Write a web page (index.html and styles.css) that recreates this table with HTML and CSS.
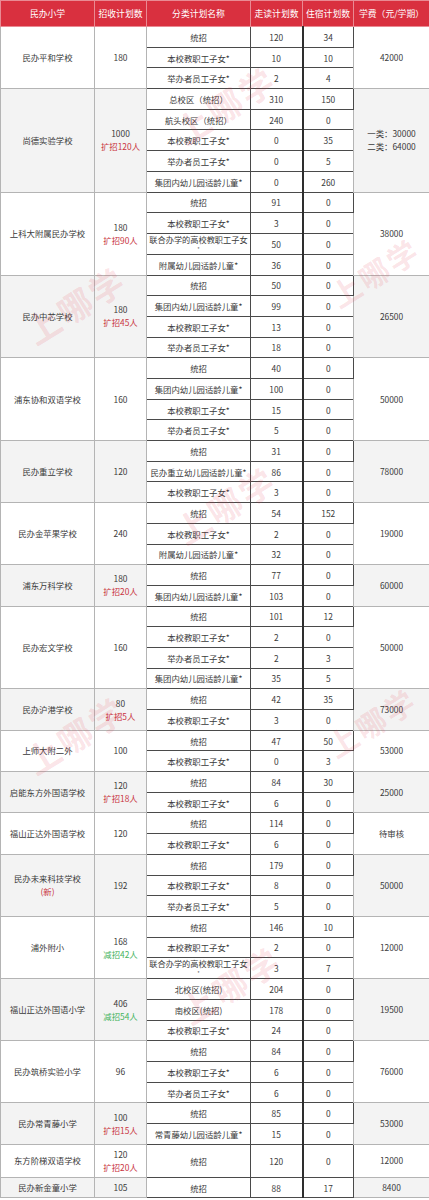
FILE: index.html
```html
<!DOCTYPE html>
<html lang="zh-CN">
<head>
<meta charset="utf-8">
<title>民办小学招生计划</title>
<link rel="stylesheet" href="styles.css">
</head>
<body>
<div class="sheet">
<table class="plan">
<colgroup>
<col class="w-school"><col class="w-plan"><col class="w-cat"><col class="w-day"><col class="w-board"><col class="w-fee">
</colgroup>
<thead>
<tr><th>民办小学</th><th>招收计划数</th><th>分类计划名称</th><th>走读计划数</th><th>住宿计划数</th><th>学费（元/学期）</th></tr>
</thead>
<tbody class="g">
<tr><td class="m" rowspan="3">民办平和学校</td><td class="m" rowspan="3">180</td><td class="s">统招</td><td class="s">120</td><td class="s b">34</td><td class="m f" rowspan="3">42000</td></tr>
<tr><td class="s">本校教职工子女*</td><td class="s">10</td><td class="s b">10</td></tr>
<tr><td class="s">举办者员工子女*</td><td class="s">2</td><td class="s b">4</td></tr>
</tbody>
<tbody class="g alt">
<tr><td class="m" rowspan="5">尚德实验学校</td><td class="m" rowspan="5">1000<br><span class="up">扩招120人</span></td><td class="s">总校区（统招）</td><td class="s">310</td><td class="s b">150</td><td class="m f" rowspan="5">一类：30000<br>二类：64000</td></tr>
<tr><td class="s">航头校区（统招）</td><td class="s">240</td><td class="s b">0</td></tr>
<tr><td class="s">本校教职工子女*</td><td class="s">0</td><td class="s b">35</td></tr>
<tr><td class="s">举办者员工子女*</td><td class="s">0</td><td class="s b">5</td></tr>
<tr><td class="s">集团内幼儿园适龄儿童*</td><td class="s">0</td><td class="s b">260</td></tr>
</tbody>
<tbody class="g">
<tr><td class="m" rowspan="4">上科大附属民办学校</td><td class="m" rowspan="4">180<br><span class="up">扩招90人</span></td><td class="s">统招</td><td class="s">91</td><td class="s b">0</td><td class="m f" rowspan="4">38000</td></tr>
<tr><td class="s">本校教职工子女*</td><td class="s">3</td><td class="s b">0</td></tr>
<tr><td class="s two"><span class="l1">联合办学的高校教职工子女</span><span class="l2">*</span></td><td class="s">50</td><td class="s b">0</td></tr>
<tr><td class="s">附属幼儿园适龄儿童*</td><td class="s">36</td><td class="s b">0</td></tr>
</tbody>
<tbody class="g alt">
<tr><td class="m" rowspan="4">民办中芯学校</td><td class="m" rowspan="4">180<br><span class="up">扩招45人</span></td><td class="s">统招</td><td class="s">50</td><td class="s b">0</td><td class="m f" rowspan="4">26500</td></tr>
<tr><td class="s">集团内幼儿园适龄儿童*</td><td class="s">99</td><td class="s b">0</td></tr>
<tr><td class="s">本校教职工子女*</td><td class="s">13</td><td class="s b">0</td></tr>
<tr><td class="s">举办者员工子女*</td><td class="s">18</td><td class="s b">0</td></tr>
</tbody>
<tbody class="g">
<tr><td class="m" rowspan="4">浦东协和双语学校</td><td class="m" rowspan="4">160</td><td class="s">统招</td><td class="s">40</td><td class="s b">0</td><td class="m f" rowspan="4">50000</td></tr>
<tr><td class="s">集团内幼儿园适龄儿童*</td><td class="s">100</td><td class="s b">0</td></tr>
<tr><td class="s">本校教职工子女*</td><td class="s">15</td><td class="s b">0</td></tr>
<tr><td class="s">举办者员工子女*</td><td class="s">5</td><td class="s b">0</td></tr>
</tbody>
<tbody class="g alt">
<tr><td class="m" rowspan="3">民办重立学校</td><td class="m" rowspan="3">120</td><td class="s">统招</td><td class="s">31</td><td class="s b">0</td><td class="m f" rowspan="3">78000</td></tr>
<tr><td class="s">民办重立幼儿园适龄儿童*</td><td class="s">86</td><td class="s b">0</td></tr>
<tr><td class="s">本校教职工子女*</td><td class="s">3</td><td class="s b">0</td></tr>
</tbody>
<tbody class="g">
<tr><td class="m" rowspan="3">民办金苹果学校</td><td class="m" rowspan="3">240</td><td class="s">统招</td><td class="s">54</td><td class="s b">152</td><td class="m f" rowspan="3">19000</td></tr>
<tr><td class="s">本校教职工子女*</td><td class="s">2</td><td class="s b">0</td></tr>
<tr><td class="s">附属幼儿园适龄儿童*</td><td class="s">32</td><td class="s b">0</td></tr>
</tbody>
<tbody class="g alt">
<tr><td class="m" rowspan="2">浦东万科学校</td><td class="m" rowspan="2">180<br><span class="up">扩招20人</span></td><td class="s">统招</td><td class="s">77</td><td class="s b">0</td><td class="m f" rowspan="2">60000</td></tr>
<tr><td class="s">集团内幼儿园适龄儿童*</td><td class="s">103</td><td class="s b">0</td></tr>
</tbody>
<tbody class="g">
<tr><td class="m" rowspan="4">民办宏文学校</td><td class="m" rowspan="4">160</td><td class="s">统招</td><td class="s">101</td><td class="s b">12</td><td class="m f" rowspan="4">50000</td></tr>
<tr><td class="s">本校教职工子女*</td><td class="s">2</td><td class="s b">0</td></tr>
<tr><td class="s">举办者员工子女*</td><td class="s">2</td><td class="s b">3</td></tr>
<tr><td class="s">集团内幼儿园适龄儿童*</td><td class="s">35</td><td class="s b">5</td></tr>
</tbody>
<tbody class="g alt">
<tr><td class="m" rowspan="2">民办沪港学校</td><td class="m" rowspan="2">80<br><span class="up">扩招5人</span></td><td class="s">统招</td><td class="s">42</td><td class="s b">35</td><td class="m f" rowspan="2">73000</td></tr>
<tr><td class="s">本校教职工子女*</td><td class="s">3</td><td class="s b">0</td></tr>
</tbody>
<tbody class="g">
<tr><td class="m" rowspan="2">上师大附二外</td><td class="m" rowspan="2">100</td><td class="s">统招</td><td class="s">47</td><td class="s b">50</td><td class="m f" rowspan="2">53000</td></tr>
<tr><td class="s">本校教职工子女*</td><td class="s">0</td><td class="s b">3</td></tr>
</tbody>
<tbody class="g alt">
<tr><td class="m" rowspan="2">启能东方外国语学校</td><td class="m" rowspan="2">120<br><span class="up">扩招18人</span></td><td class="s">统招</td><td class="s">84</td><td class="s b">30</td><td class="m f" rowspan="2">25000</td></tr>
<tr><td class="s">本校教职工子女*</td><td class="s">6</td><td class="s b">0</td></tr>
</tbody>
<tbody class="g">
<tr><td class="m" rowspan="2">福山正达外国语学校</td><td class="m" rowspan="2">120</td><td class="s">统招</td><td class="s">114</td><td class="s b">0</td><td class="m f" rowspan="2">待审核</td></tr>
<tr><td class="s">本校教职工子女*</td><td class="s">6</td><td class="s b">0</td></tr>
</tbody>
<tbody class="g alt">
<tr><td class="m" rowspan="3">民办未来科技学校<br><span class="up">(新)</span></td><td class="m" rowspan="3">192</td><td class="s">统招</td><td class="s">179</td><td class="s b">0</td><td class="m f" rowspan="3">50000</td></tr>
<tr><td class="s">本校教职工子女*</td><td class="s">8</td><td class="s b">0</td></tr>
<tr><td class="s">举办者员工子女*</td><td class="s">5</td><td class="s b">0</td></tr>
</tbody>
<tbody class="g">
<tr><td class="m" rowspan="3">浦外附小</td><td class="m" rowspan="3">168<br><span class="down">减招42人</span></td><td class="s">统招</td><td class="s">146</td><td class="s b">10</td><td class="m f" rowspan="3">12000</td></tr>
<tr><td class="s">本校教职工子女*</td><td class="s">2</td><td class="s b">0</td></tr>
<tr><td class="s two"><span class="l1">联合办学的高校教职工子女</span><span class="l2">*</span></td><td class="s">3</td><td class="s b">7</td></tr>
</tbody>
<tbody class="g alt">
<tr><td class="m" rowspan="3">福山正达外国语小学</td><td class="m" rowspan="3">406<br><span class="down">减招54人</span></td><td class="s">北校区(统招)</td><td class="s">204</td><td class="s b">0</td><td class="m f" rowspan="3">19500</td></tr>
<tr><td class="s">南校区(统招)</td><td class="s">178</td><td class="s b">0</td></tr>
<tr><td class="s">本校教职工子女*</td><td class="s">24</td><td class="s b">0</td></tr>
</tbody>
<tbody class="g">
<tr><td class="m" rowspan="3">民办筑桥实验小学</td><td class="m" rowspan="3">96</td><td class="s">统招</td><td class="s">84</td><td class="s b">0</td><td class="m f" rowspan="3">76000</td></tr>
<tr><td class="s">本校教职工子女*</td><td class="s">6</td><td class="s b">0</td></tr>
<tr><td class="s">举办者员工子女*</td><td class="s">6</td><td class="s b">0</td></tr>
</tbody>
<tbody class="g alt">
<tr><td class="m" rowspan="2">民办常青藤小学</td><td class="m" rowspan="2">100<br><span class="up">扩招15人</span></td><td class="s">统招</td><td class="s">85</td><td class="s b">0</td><td class="m f" rowspan="2">53000</td></tr>
<tr><td class="s">常青藤幼儿园适龄儿童*</td><td class="s">15</td><td class="s b">0</td></tr>
</tbody>
<tbody class="g">
<tr class="tall"><td class="m">东方阶梯双语学校</td><td class="m">120<br><span class="up">扩招20人</span></td><td class="s">统招</td><td class="s">120</td><td class="s b">0</td><td class="m f">12000</td></tr>
</tbody>
<tbody class="g alt">
<tr><td class="m">民办新金童小学</td><td class="m">105</td><td class="s">统招</td><td class="s">88</td><td class="s b">17</td><td class="m f">8400</td></tr>
</tbody>
</table>
<div class="wm wm1">上哪学</div>
<div class="wm wm2">上哪学</div>
<div class="wm wm3">上哪学</div>
<div class="wm wm4">上哪学</div>
<div class="wm wm5">上哪学</div>
<div class="wm wm6">上哪学</div>
<div class="wm wm7">上哪学</div>
</div>
</body>
</html>
```

FILE: styles.css
```css
body {
  margin: 0;
  background: #ffffff;
  font-family: "Noto Sans CJK SC", "Noto Sans", sans-serif;
}

.sheet {
  position: relative;
  width: 429px;
  overflow: hidden;
}

.plan {
  width: 429px;
  border-collapse: collapse;
  table-layout: fixed;
  font-size: 8.4px;
  color: #3a3a3a;
  border-left: 1px solid #9a9a9a;
  border-right: 1px solid #9a9a9a;
}

.w-school { width: 94px; }
.w-plan { width: 52px; }
.w-cat { width: 104px; }
.w-day { width: 52px; }
.w-board { width: 51px; }
.w-fee { width: 76px; }

.plan th {
  height: 25px;
  padding: 0;
  background: #d9303f;
  color: #ffffff;
  font-weight: normal;
  font-size: 8.8px;
  border: 1px solid #e98a93;
  white-space: nowrap;
}

.plan tr {
  height: 20.7px;
}

.plan tr.tall {
  height: 33px;
}

.plan td {
  padding: 0;
  text-align: center;
  vertical-align: middle;
  line-height: 12px;
  white-space: nowrap;
  border: 1px solid #b4b4b4;
}

.plan td.m {
  line-height: 13px;
  background: #ffffff;
}

.plan .alt td.m {
  background: #f3f3f3;
}

.plan td.s {
  border: 1px solid #4a4a4a;
  background: #ffffff;
}

.plan td.b {
  border-left: 2px solid #2e2e2e;
}

.plan td.two .l1 {
  display: block;
  font-size: 8.2px;
  line-height: 11px;
  height: 11px;
}

.plan td.two .l2 {
  display: block;
  font-size: 5.5px;
  line-height: 9px;
  height: 9px;
}

.plan tbody.g tr:first-child td {
  border-top: 1px solid #3a3a3a;
}

.up {
  color: #c9343f;
}

.down {
  color: #47b35e;
}

.wm {
  position: absolute;
  pointer-events: none;
  font-size: 34px;
  font-weight: bold;
  letter-spacing: 3px;
  color: rgba(228, 60, 80, 0.15);
  transform: rotate(-32deg);
  white-space: nowrap;
}

.wm1 { left: 170px; top: 80px; }
.wm2 { left: 20px; top: 280px; }
.wm3 { left: 325px; top: 250px; font-size: 30px; }
.wm4 { left: 170px; top: 480px; }
.wm5 { left: 20px; top: 710px; }
.wm6 { left: 322px; top: 700px; font-size: 30px; }
.wm7 { left: 175px; top: 960px; }
```
